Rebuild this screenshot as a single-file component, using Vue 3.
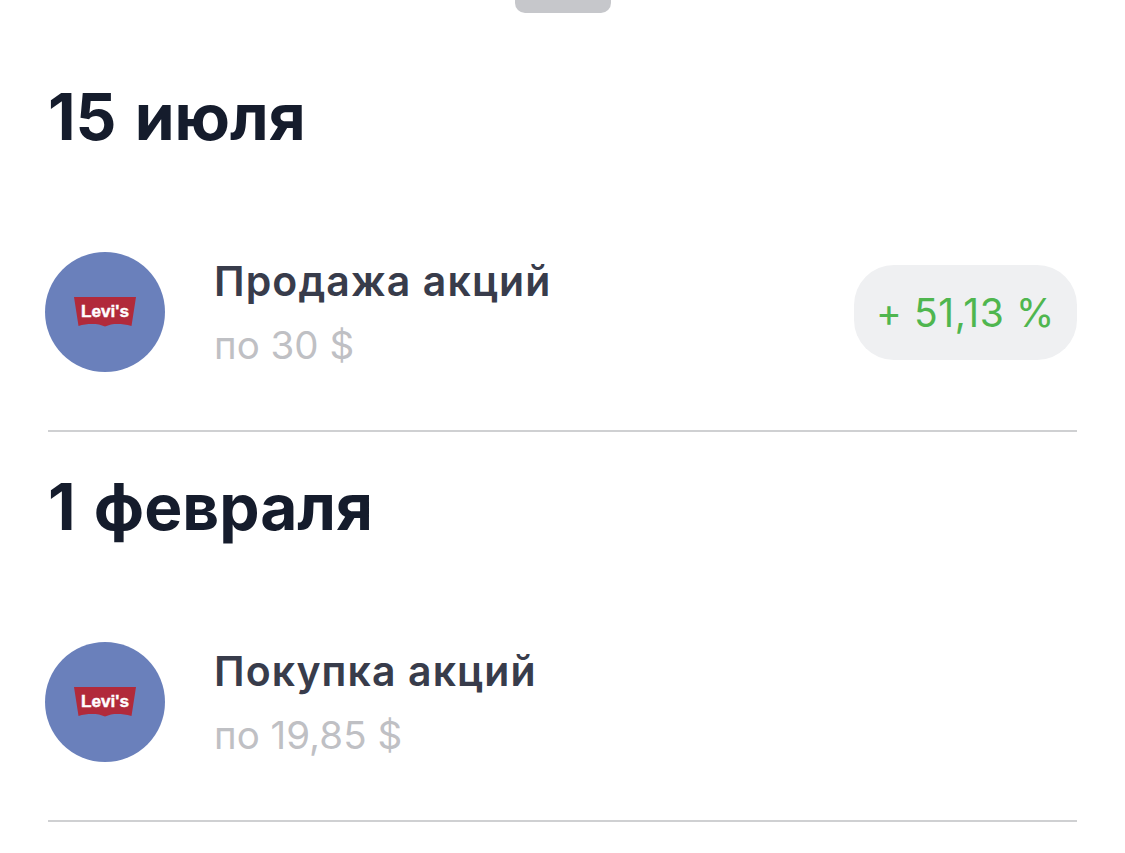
<script setup>
const sections = [
  { date: '15 июля', title: 'Продажа акций', price: 'по 30 $', badge: '+ 51,13 %' },
  { date: '1 февраля', title: 'Покупка акций', price: 'по 19,85 $', badge: null },
]
</script>

<template>
  <main class="sheet">
    <div class="handle"></div>
    <section v-for="s in sections" :key="s.date" class="section">
      <h2 class="date">{{ s.date }}</h2>
      <div class="row">
        <div class="avatar">
          <svg class="logo" viewBox="0 0 62 30" width="62" height="30">
            <path d="M0 0H62L57.500 29C50 27 43 26.500 37 27.500L31 29.500L25 27.500C18 26.500 11 27 4.500 29Z" fill="#b12a3b" />
            <text x="31" y="20" text-anchor="middle" textLength="48" lengthAdjust="spacingAndGlyphs" class="logo-text">Levi's</text>
          </svg>
        </div>
        <div class="info">
          <div class="title">{{ s.title }}</div>
          <div class="price">{{ s.price }}</div>
        </div>
        <div v-if="s.badge" class="badge">{{ s.badge }}</div>
      </div>
    </section>
  </main>
</template>

<style>
html, body { margin: 0; background: #fff; }
</style>

<style scoped>
.sheet {
  width: 1125px;
  height: 853px;
  overflow: hidden;
  box-sizing: border-box;
  padding: 0 48px;
  background: #fff;
  font-family: Inter, "Liberation Sans", sans-serif;
}
.handle {
  width: 96px;
  height: 13px;
  margin: 0 auto 66px;
  background: #c6c7cb;
  border-radius: 0 0 10px 10px;
}
.section {
  padding: 0 0 58px;
  border-bottom: 2px solid #cfd0d2;
  margin-bottom: 37px;
}
.date {
  margin: 0 0 97px;
  font-size: 64px;
  line-height: 76px;
  font-weight: 700;
  word-spacing: 3px;
  color: #151c2c;
}
.row {
  display: flex;
  align-items: center;
  height: 120px;
  margin-left: -3px;
}
.avatar {
  width: 120px;
  height: 120px;
  flex: none;
  border-radius: 50%;
  background: #6a80bb;
  display: flex;
  align-items: center;
  justify-content: center;
}
.logo { display: block; }
.logo-text {
  font-family: "Liberation Sans", sans-serif;
  font-size: 16px;
  font-weight: 700;
  fill: #fff;
  stroke: #fff;
  stroke-width: 0.4px;
}
.info {
  margin-left: 49px;
  padding-top: 2px;
  flex: 1;
}
.title {
  font-size: 41px;
  line-height: 48px;
  font-weight: 600;
  letter-spacing: 1.100px;
  color: #383c4b;
}
.price {
  margin-top: 16px;
  font-size: 38.500px;
  line-height: 48px;
  color: #bfc0c4;
}
.badge {
  width: 223px;
  height: 95px;
  border-radius: 40px;
  background: #eff0f2;
  color: #4fb64f;
  font-size: 39px;
  letter-spacing: 0.600px;
  display: flex;
  align-items: center;
  justify-content: center;
}
</style>
